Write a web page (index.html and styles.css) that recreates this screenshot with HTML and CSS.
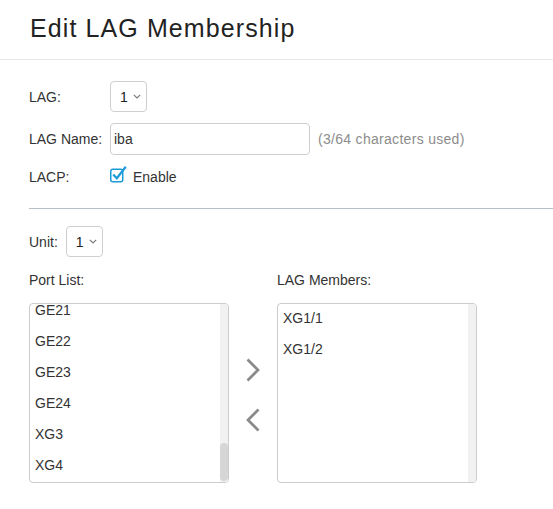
FILE: index.html
```html
<!DOCTYPE html>
<html lang="en">
<head>
<meta charset="utf-8">
<title>Edit LAG Membership</title>
<link rel="stylesheet" href="styles.css">
</head>
<body>
<header class="page-header">
  <h1 class="page-title">Edit LAG Membership</h1>
</header>
<main class="form">
  <div class="settings">
    <label class="label">LAG:</label>
    <div class="field">
      <div class="select"><span>1</span><svg class="caret" width="8" height="5" viewBox="0 0 8 5"><path d="M0.8 0.8 L4 4 L7.2 0.8" fill="none" stroke="#7a7a7a" stroke-width="1.2"/></svg></div>
    </div>
    <label class="label">LAG Name:</label>
    <div class="field">
      <input class="text-input" type="text" value="iba">
      <span class="hint">(3/64 characters used)</span>
    </div>
    <label class="label label--short">LACP:</label>
    <div class="field field--short">
      <svg class="checkbox" width="17" height="18" viewBox="0 0 17 18"><rect x="0.75" y="4.25" width="12" height="12.5" rx="2" fill="#fff" stroke="#1d9ad8" stroke-width="1.5"/><path d="M3.2 9.4 L6.8 13.2 L15.8 1.8" fill="none" stroke="#1d9ad8" stroke-width="2.2"/></svg>
      <span class="check-label">Enable</span>
    </div>
  </div>
  <hr class="divider">
  <div class="unit-row">
    <span class="label-inline">Unit:</span>
    <div class="select"><span>1</span><svg class="caret" width="8" height="5" viewBox="0 0 8 5"><path d="M0.8 0.8 L4 4 L7.2 0.8" fill="none" stroke="#7a7a7a" stroke-width="1.2"/></svg></div>
  </div>
  <div class="transfer">
    <div class="transfer-label">Port List:</div>
    <div></div>
    <div class="transfer-label">LAG Members:</div>
    <div class="list-box">
      <div class="list scroll-end">
        <div class="item">GE1</div><div class="item">GE2</div><div class="item">GE3</div><div class="item">GE4</div>
        <div class="item">GE5</div><div class="item">GE6</div><div class="item">GE7</div><div class="item">GE8</div>
        <div class="item">GE9</div><div class="item">GE10</div><div class="item">GE11</div><div class="item">GE12</div>
        <div class="item">GE13</div><div class="item">GE14</div><div class="item">GE15</div><div class="item">GE16</div>
        <div class="item">GE17</div><div class="item">GE18</div><div class="item">GE19</div><div class="item">GE20</div>
        <div class="item">GE21</div><div class="item">GE22</div><div class="item">GE23</div><div class="item">GE24</div>
        <div class="item">XG3</div><div class="item">XG4</div>
      </div>
      <div class="scroll-track"><div class="scroll-thumb"></div></div>
    </div>
    <div class="arrows">
      <svg class="arrow" width="16" height="24" viewBox="0 0 16 24"><path d="M2.5 1.5 L13 12 L2.5 22.5" fill="none" stroke="#8a8a8a" stroke-width="2.7"/></svg>
      <svg class="arrow" width="16" height="24" viewBox="0 0 16 24"><path d="M13.5 1.5 L3 12 L13.5 22.5" fill="none" stroke="#8a8a8a" stroke-width="2.7"/></svg>
    </div>
    <div class="list-box">
      <div class="list">
        <div class="item">XG1/1</div>
        <div class="item">XG1/2</div>
      </div>
      <div class="scroll-track"></div>
    </div>
  </div>
</main>
<script src="script.js"></script>
</body>
</html>
```

FILE: styles.css
```css
* { box-sizing: border-box; }

body {
  margin: 0;
  font-family: "Liberation Sans", Arial, sans-serif;
  font-size: 14px;
  line-height: 20px;
  color: #333;
  background: #fff;
}

.page-header {
  height: 60px;
  padding: 13px 30px 0;
  border-bottom: 1px solid #e6e6e6;
}

.page-title {
  margin: 0;
  font-size: 25px;
  line-height: 30px;
  font-weight: normal;
  letter-spacing: 1.1px;
  color: #222;
}

.form {
  padding: 21px 0 0 29px;
}

.settings {
  display: grid;
  grid-template-columns: 81px auto;
  row-gap: 11px;
  align-items: center;
}

.label { color: #333; }

.field {
  display: flex;
  align-items: center;
  min-height: 31px;
}

.field--short { min-height: 20px; height: 20px; }
.settings .label--short { margin-top: 1px; }

.select {
  width: 37px;
  height: 31px;
  border: 1px solid #cfcfcf;
  border-radius: 4px;
  display: flex;
  align-items: center;
  justify-content: space-between;
  padding: 0 5px 0 9px;
  color: #222;
  background: #fff;
}

.caret { display: block; }

.text-input {
  width: 200px;
  height: 32px;
  border: 1px solid #cfcfcf;
  border-radius: 4px;
  padding: 0 3px;
  font-family: inherit;
  font-size: 14px;
  color: #333;
  outline: none;
}

.hint {
  margin-left: 8px;
  color: #8c8c8c;
  letter-spacing: 0.3px;
}

.checkbox {
  display: block;
  margin-top: -5px;
}

.check-label {
  margin-left: 6px;
}

.divider {
  margin: 21px 0 0;
  border: 0;
  border-top: 1px solid #b4c1c9;
  height: 0;
}

.unit-row {
  display: flex;
  align-items: center;
  gap: 8px;
  margin-top: 17px;
}

.transfer {
  display: grid;
  grid-template-columns: 200px 48px 200px;
  row-gap: 13px;
  margin-top: 13px;
}

.list-box {
  position: relative;
  height: 180px;
  border: 1px solid #cccccc;
  border-radius: 4px;
  overflow: hidden;
}

.list {
  height: 100%;
  overflow-y: scroll;
  scrollbar-width: none;
  color: #333;
}

.list::-webkit-scrollbar { display: none; }

.scroll-track {
  position: absolute;
  top: 0;
  right: 0;
  bottom: 0;
  width: 8px;
  background: #f1f1f1;
}

.scroll-thumb {
  position: absolute;
  left: 0;
  right: 0;
  bottom: 1px;
  height: 38px;
  border-radius: 4px;
  background: #d6d6d6;
}

.item {
  padding: 4px 5px 7px;
  line-height: 20px;
  white-space: nowrap;
}

.arrows {
  display: flex;
  flex-direction: column;
  align-items: center;
  padding-top: 55px;
  gap: 26px;
}

.arrow { display: block; }
```

FILE: script.js
```js
document.querySelectorAll('.scroll-end').forEach(function (el) {
  el.scrollTop = el.scrollHeight;
});
```
